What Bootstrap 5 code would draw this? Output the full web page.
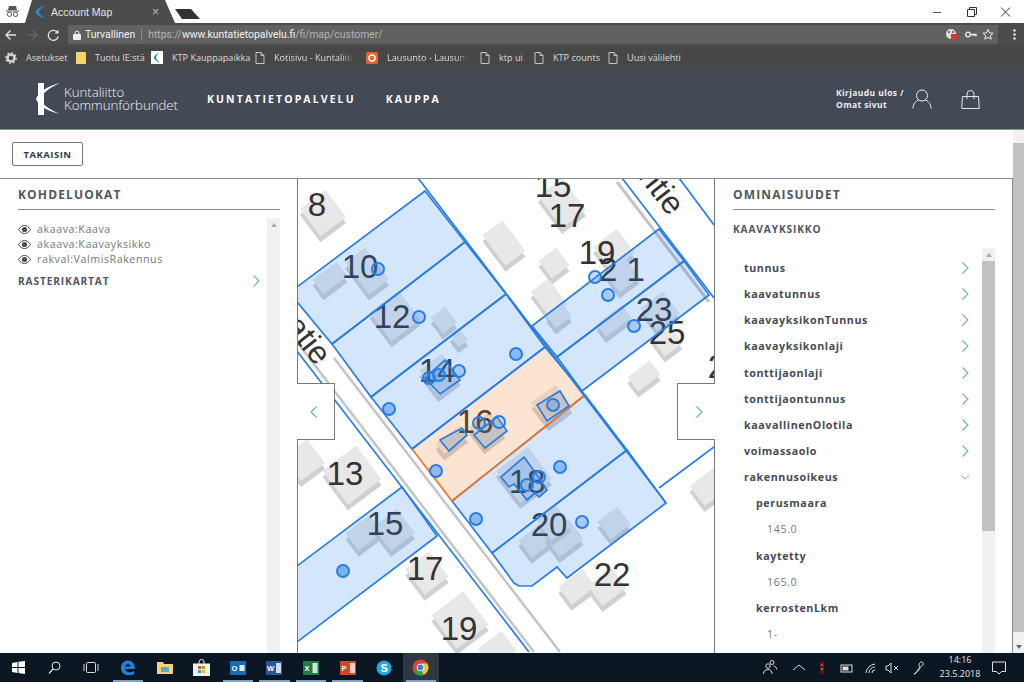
<!DOCTYPE html>
<html lang="fi">
<head>
<meta charset="UTF-8">
<title>Account Map</title>
<link rel="stylesheet" href="https://cdn.jsdelivr.net/npm/bootstrap@5.3.0/dist/css/bootstrap.min.css">
<style>
html, body { height: 682px; overflow: hidden; }
body { font-family: "Open Sans", "Liberation Sans", sans-serif; background: #fff; color: #4a4f57; }
svg { display: block; flex: none; }

/* selaimen yläosa */
.tabstrip { height: 23px; }
.incog { width: 25px; }
.tabshape { width: 150px; height: 23px; background: #4b4b4b; color: #e6e6e6; font: 10.5px "Liberation Sans", sans-serif; clip-path: polygon(0 100%, 7px 0, 140px 0, 100% 100%); padding: 0 11px 0 10px; }
.tabclose { margin-left: auto; margin-right: 5px; color: #bbb; font-size: 12px; }
.newtab { width: 25px; height: 10px; margin-bottom: 4px; background: #333; clip-path: polygon(0 0, 16px 0, 100% 100%, 7px 100%); }
.winbtns { width: 96px; }
.toolbar { height: 23px; background: #4b4b4b; }
.urlbox { width: 930px; height: 19px; margin-left: 6px; background: #616161; font: 10.4px Roboto, "Liberation Sans", sans-serif; color: #f2f2f2; padding: 0 3px 0 5px; }
.urlbox .sep { width: 1px; height: 13px; background: #888; margin: 0 6px; }
.urlbox i { font-style: normal; color: #b4b4b4; }
.bookmarks { height: 23px; background: #474747; color: #dcdcdc; font: 9.1px "Open Sans", sans-serif; padding-left: 5px; }
.bm { display: flex; align-items: center; gap: 9px; white-space: nowrap; }
.bm:nth-child(1) { width: 71px; }
.bm:nth-child(2) { width: 75px; }
.bm:nth-child(3) { width: 104px; }
.bm:nth-child(4) { width: 111px; }
.bm:nth-child(5) { width: 114px; }
.bm:nth-child(6) { width: 54px; }
.bm:nth-child(7) { width: 74px; }
.bm .cut { overflow: hidden; -webkit-mask-image: linear-gradient(90deg, #000 85%, transparent); mask-image: linear-gradient(90deg, #000 85%, transparent); }
.bm .cutk { width: 80px; }
.bm .cutl { width: 81px; }

/* sivun ylätunniste */
.ktp-head { height: 61px; background: #434a56; border-bottom: 1px solid #4aa9bd; padding: 0; }
.logoarea { margin-left: 35px; width: 172px; }
.logotxt { font: 300 13.2px/13px "Open Sans", sans-serif; color: #f2f2f2; margin-left: 3px; }
.ktp-head .navbar-nav .nav-link { padding: 0; color: #fff; font: 700 10.5px "Open Sans", sans-serif; letter-spacing: 2.1px; }
.navone { margin-right: 30px; }
.userbox { margin-left: auto; margin-right: 44px; color: #eceef0; font: 700 8.5px/12px "Open Sans", sans-serif; letter-spacing: .4px; }
.bagicon { margin-left: 21px; }

/* sisältö */
.pagewrap { flex: 1; min-height: 0; }
.pagecol { width: 1013px; }
.backrow { height: 48px; padding: 12px 0 0 12px; }
.backbtn { display: block; width: 71px; height: 24px; padding: 0; border: 1px solid #777; border-radius: 2px; background: #fff; color: #333b45; font: 700 9.5px "Open Sans", sans-serif; letter-spacing: .5px; }
.mainrow { height: 475px; border-top: 1px solid #8b8b8b; border-right: 1px solid #8b8b8b; }
.leftcol { width: 297px; padding: 0 17px 0 18px; }
.mapcol { width: 418px; border-left: 1px solid #777; border-right: 1px solid #777; }
.rightcol { width: 297px; padding: 0 17px 0 18px; }
.paneltitle { height: 31px; margin: 0; padding-top: 7px; border-bottom: 1px solid #8b8b8b; font: 700 12px/17px "Open Sans", sans-serif; letter-spacing: 1.15px; color: #50565f; }
.scrollpane { flex: 1; min-height: 0; }
.paneltrack { width: 13px; background: #f1f1f1; }
.paneltrack .thumb { height: 270px; margin-top: 13px; background: #c1c1c1; }
.tritop { display: block; margin: 5px auto 0; width: 0; height: 0; border: 3px solid transparent; border-top: 0; border-bottom: 4px solid #a9a9a9; }
.layerlist { margin-top: 12px; font-size: 10.7px; line-height: 15px; letter-spacing: .55px; color: #777; }
.layerlist li { display: flex; align-items: center; gap: 6px; }
.subhead { font: 700 10.2px/14px "Open Sans", sans-serif; letter-spacing: .85px; color: #50565f; }
.rasterrow { margin-top: 7px; padding-right: 7px; }
.kvtitle { margin: 12px 0 12px; }
.proplist { --bs-list-group-bg: transparent; --bs-list-group-border-width: 0; --bs-list-group-item-padding-x: 0; --bs-list-group-item-padding-y: 0; --bs-list-group-color: #454b54; padding: 7px 12px 0 11px; }
.proplist .list-group-item { height: 26.15px; display: flex; align-items: center; justify-content: space-between; font-size: 10.7px; font-weight: 700; letter-spacing: .6px; }
.proplist .lvl2 { padding-left: 12px; }
.proplist .lvl3 { padding-left: 23px; font-weight: 400; color: #777; }
.chevr { margin-right: 1px; }

/* kartta */
.mapbtn { position: absolute; width: 38px; height: 57px; top: 204px; background: #fff; border: 1px solid #777; display: flex; align-items: center; justify-content: center; }
.mapbtn.prev { left: -1px; border-left: 0; }
.mapbtn.next { right: -1px; border-right: 0; }

/* sivun vierityspalkki */
.pagescroll { width: 11px; background: #c1c1c1; position: relative; }
.pagescroll .topcap { height: 13px; background: #f1f1f1; }
.pagescroll .botcap { position: absolute; bottom: 0; left: 0; right: 0; height: 21px; background: #f1f1f1; }
.tribot { position: absolute; bottom: 4px; left: 3px; width: 0; height: 0; border: 3px solid transparent; border-bottom: 0; border-top: 4px solid #666; }

/* tehtäväpalkki */
.taskbar { height: 29px; background: #0a1622; color: #e8e8e8; font: 9px/14px "Open Sans", sans-serif; }
.tbslot { width: 36.6px; height: 29px; display: flex; align-items: center; justify-content: center; position: relative; }
.tbslot.run::after { content: ""; position: absolute; left: 3px; right: 3px; bottom: 0; height: 2px; background: #7aa4c8; }
.tbslot.act { background: #2f3841; }
.appglyph { font: 700 7.5px "Liberation Sans", sans-serif; fill: #fff; }
.tray { margin-left: auto; }
.clockbox { width: 56px; text-align: center; margin: -2px 4px 0 0; }
.notif { margin-right: 18px; }
</style>
</head>
<body class="d-flex flex-column">

<svg width="0" height="0" class="position-absolute">
  <symbol id="chev" viewBox="0 0 8 14"><path d="M1.500 1.500l5.500 5.500-5.500 5.500" fill="none" stroke="#6aa9ca" stroke-width="1.100"/></symbol>
  <symbol id="eye" viewBox="0 0 13 9"><path d="M.5 4.500C2.500 1.500 4.500.5 6.500.5s4 1 6 4c-2 3-4 4-6 4s-4-1-6-4z" fill="none" stroke="#4d4d4d"/><circle cx="6.500" cy="4.500" r="2.600" fill="#4d4d4d"/></symbol>
  <symbol id="doc" viewBox="0 0 10 12"><path d="M1 .5h5l3 3v8H1zM6 .5v3h3" fill="none" stroke="#d4d4d4" stroke-width=".9"/></symbol>
</svg>

<!-- selaimen välilehdet -->
<div class="tabstrip d-flex align-items-end">
  <div class="incog d-flex justify-content-center align-self-center">
    <svg width="13" height="11" viewBox="0 0 13 11"><path d="M3 0h7l1 4H2zM0 4.500h13v1H0z" fill="#555"/><circle cx="3.500" cy="8.300" r="2.200" fill="none" stroke="#555"/><circle cx="9.500" cy="8.300" r="2.200" fill="none" stroke="#555"/></svg>
  </div>
  <div class="tabshape d-flex align-items-center gap-1">
    <svg width="12" height="14" viewBox="0 0 12 14"><path d="M11 0C5 2 1 5 .5 7c.5 3 5 5 10.500 7C7 11 4 9 4 7s3-4 7-7z" fill="#2c8fc4"/></svg>
    <span>Account Map</span>
    <span class="tabclose">×</span>
  </div>
  <div class="newtab"></div>
  <div class="winbtns ms-auto align-self-center">
    <svg width="96" height="12" viewBox="0 0 96 12"><path d="M5 6.500h8" stroke="#555"/><path d="M39.500 3.500h7v7h-7zM41.500 3.500v-2h7v7h-2" fill="none" stroke="#333"/><path d="M73 1.500l9 9M82 1.500l-9 9" stroke="#333"/></svg>
  </div>
</div>

<!-- osoiterivi -->
<div class="toolbar d-flex align-items-center">
  <svg class="ms-1" width="58" height="14" viewBox="0 0 58 14"><path d="M12 7H2M6.500 2.500L2 7l4.500 4.500" fill="none" stroke="#e4e4e4" stroke-width="1.300"/><path d="M33 7H23M28.500 2.500L33 7l-4.500 4.500" fill="none" stroke="#666" stroke-width="1.300"/><path d="M53.500 4.500a5 5 0 1 0 .7 4" fill="none" stroke="#e4e4e4" stroke-width="1.300"/><path d="M54.500 1.500v4h-4z" fill="#e4e4e4"/></svg>
  <div class="urlbox d-flex align-items-center">
    <svg width="8" height="10" viewBox="0 0 8 10" class="me-1"><path d="M2 4V3a2 2 0 0 1 4 0v1" fill="none" stroke="#eee"/><rect y="4" width="8" height="6" rx="1" fill="#eee"/></svg>
    <span class="ms-0">Turvallinen</span><span class="sep"></span>
    <span><i>https://</i>www.kuntatietopalvelu.fi<i>/fi/map/customer/</i></span>
    <svg class="ms-auto" width="50" height="13" viewBox="0 0 50 13"><circle cx="6" cy="6" r="5" fill="#dedede"/><circle cx="4" cy="4" r="1" fill="#555"/><circle cx="8" cy="4" r="1" fill="#555"/><rect x="6" y="6" width="6" height="6" fill="#d33"/><circle cx="23" cy="6.500" r="2.300" fill="none" stroke="#eee" stroke-width="1.300"/><path d="M25 6.500h6v2M29 6.500v1.500" fill="none" stroke="#eee" stroke-width="1.300"/><path d="M43 1.500l1.500 3.400 3.600.3-2.700 2.400.8 3.600-3.200-1.900-3.200 1.900.8-3.600-2.700-2.400 3.600-.3z" fill="none" stroke="#eee"/></svg>
  </div>
  <svg class="ms-auto me-2" width="3" height="11" viewBox="0 0 3 11"><circle cx="1.500" cy="1.500" r="1.200" fill="#eee"/><circle cx="1.500" cy="5.500" r="1.200" fill="#eee"/><circle cx="1.500" cy="9.500" r="1.200" fill="#eee"/></svg>
</div>

<!-- kirjanmerkit -->
<div class="bookmarks d-flex align-items-center">
  <div class="bm"><svg width="12" height="12" viewBox="0 0 12 12"><circle cx="6" cy="6" r="3.500" fill="none" stroke="#d4d4d4" stroke-width="2.500"/><circle cx="6" cy="6" r="5.200" fill="none" stroke="#d4d4d4" stroke-width="1.300" stroke-dasharray="2 2"/></svg><span>Asetukset</span></div>
  <div class="bm"><svg width="10" height="12" viewBox="0 0 10 12"><rect width="10" height="12" rx="1" fill="#f4d66b"/></svg><span>Tuotu IE:stä</span></div>
  <div class="bm"><svg width="12" height="13" viewBox="0 0 12 13"><rect width="12" height="13" fill="#fff"/><path d="M9 1C5 3 3 5 3 6.500S5 10 9 12C6 9 5 8 5 6.500S6 3 9 1z" fill="#1b7fb2"/></svg><span>KTP Kauppapaikka</span></div>
  <div class="bm"><svg width="10" height="12"><use href="#doc"/></svg><span class="cut cutk">Kotisivu - Kuntaliitor</span></div>
  <div class="bm"><svg width="12" height="12" viewBox="0 0 12 12"><rect width="12" height="12" rx="2" fill="#e8642c"/><circle cx="6" cy="6" r="3" fill="none" stroke="#fff" stroke-width="1.500"/></svg><span class="cut cutl">Lausunto - Lausunto</span></div>
  <div class="bm"><svg width="10" height="12"><use href="#doc"/></svg><span>ktp ui</span></div>
  <div class="bm"><svg width="10" height="12"><use href="#doc"/></svg><span>KTP counts</span></div>
  <div class="bm"><svg width="10" height="12"><use href="#doc"/></svg><span>Uusi välilehti</span></div>
</div>

<!-- sivun ylätunniste -->
<nav class="navbar navbar-expand ktp-head flex-nowrap align-items-center">
  <div class="logoarea d-flex align-items-center">
    <svg width="26" height="34" viewBox="0 0 26 34"><path d="M3 1h6v32H3z" fill="#fff"/><path d="M25 1C17 5 9 9 7 15c-2 5 2 10 18 17C15 30 3 24 1 17 3 10 13 4 25 1z" fill="#fff"/></svg>
    <div class="logotxt">Kuntaliitto<br>Kommunförbundet</div>
  </div>
  <ul class="navbar-nav">
    <li class="nav-item navone"><a class="nav-link" href="#">KUNTATIETOPALVELU</a></li>
    <li class="nav-item"><a class="nav-link" href="#">KAUPPA</a></li>
  </ul>
  <div class="userbox d-flex align-items-center gap-2">
    <div>Kirjaudu ulos /<br>Omat sivut</div>
    <svg width="20" height="20" viewBox="0 0 20 20"><circle cx="10" cy="6.500" r="5.500" fill="none" stroke="#eee"/><path d="M.8 19.500c.5-5 3.500-8 6-8.500M19.200 19.500c-.5-5-3.500-8-6-8.500" fill="none" stroke="#eee"/></svg>
    <svg class="bagicon" width="19" height="19" viewBox="0 0 19 19"><path d="M1.500 6.500h16l.8 12H.7zM6 9V4a3.500 3.500 0 0 1 7 0v5" fill="none" stroke="#e4e4e4"/></svg>
  </div>
</nav>

<div class="pagewrap d-flex">
  <div class="pagecol">
    <div class="backrow"><button type="button" class="btn backbtn">TAKAISIN</button></div>

    <div class="mainrow d-flex">
      <!-- kohdeluokat -->
      <div class="leftcol d-flex flex-column">
        <h2 class="paneltitle">KOHDELUOKAT</h2>
        <div class="scrollpane d-flex">
          <div class="flex-grow-1">
            <ul class="layerlist list-unstyled mb-0">
              <li><svg width="13" height="9"><use href="#eye"/></svg>akaava:Kaava</li>
              <li><svg width="13" height="9"><use href="#eye"/></svg>akaava:Kaavayksikko</li>
              <li><svg width="13" height="9"><use href="#eye"/></svg>rakval:ValmisRakennus</li>
            </ul>
            <div class="rasterrow subhead d-flex justify-content-between align-items-center">RASTERIKARTAT<svg width="8" height="14"><use href="#chev"/></svg></div>
          </div>
          <div class="paneltrack mt-2"><span class="tritop"></span></div>
        </div>
      </div>

      <!-- kartta -->
      <div class="mapcol position-relative">
        <svg id="kartta" width="416" height="474" viewBox="1 1 416 474"></svg>
        <div class="mapbtn prev"><svg width="8" height="14" class="me-1"><use href="#chev" transform="matrix(-1 0 0 1 8 0)"/></svg></div>
        <div class="mapbtn next"><svg width="8" height="14" class="ms-1"><use href="#chev"/></svg></div>
      </div>

      <!-- ominaisuudet -->
      <div class="rightcol d-flex flex-column">
        <h2 class="paneltitle">OMINAISUUDET</h2>
        <div class="subhead kvtitle">KAAVAYKSIKKO</div>
        <div class="scrollpane d-flex overflow-hidden">
          <div class="flex-grow-1">
            <div class="list-group proplist" id="proplist"></div>
          </div>
          <div class="paneltrack"><span class="tritop position-absolute ms-1"></span><div class="thumb"></div></div>
        </div>
      </div>
    </div>
  </div>
  <div class="pagescroll"><div class="topcap"></div><div class="botcap"><span class="tribot"></span></div></div>
</div>

<!-- tehtäväpalkki -->
<div class="taskbar d-flex align-items-center">
  <div class="tbslot"><svg width="13" height="13" viewBox="0 0 13 13"><path d="M0 2l5.500-1v5H0zM6.500.8L13 0v6H6.500zM0 7h5.500v5L0 11zM6.500 7H13v6l-6.500-.9z" fill="#fff"/></svg></div>
  <div class="tbslot"><svg width="13" height="13" viewBox="0 0 13 13"><circle cx="8" cy="5" r="4" fill="none" stroke="#e4e4e4"/><path d="M5 8l-4 4.500" stroke="#e4e4e4" stroke-width="1.200"/></svg></div>
  <div class="tbslot"><svg width="16" height="11" viewBox="0 0 16 11"><rect x="3.500" y=".5" width="9" height="10" rx="1" fill="none" stroke="#ddd"/><path d="M1 2v7M15 2v7" stroke="#ddd"/></svg></div>
  <div class="tbslot run"><svg width="16" height="16" viewBox="0 0 16 16"><path d="M1 8c0-5 3-7.500 7-7.500s7 3 7 8.500H5c.3 3 4.500 4.500 9 2v3.500c-6 2-13 .5-13-6.500zM5 6.500h5.500C10.300 3.500 5.500 3.500 5 6.500z" fill="#1e7fd6"/></svg></div>
  <div class="tbslot"><svg width="16" height="13" viewBox="0 0 16 13"><path d="M0 1h6l1 2h9v10H0z" fill="#f2d374"/><rect x="4" y="6" width="8" height="5" fill="#4fb0c6"/></svg></div>
  <div class="tbslot"><svg width="17" height="17" viewBox="0 0 17 17"><path d="M6 5V3a2.500 2.500 0 0 1 5 0v2" fill="none" stroke="#eee"/><rect y="4.500" width="17" height="12.500" fill="#f2f2f2"/><rect x="5" y="7" width="3" height="3" fill="#e6532c"/><rect x="9" y="7" width="3" height="3" fill="#7cb82f"/><rect x="5" y="11" width="3" height="3" fill="#2d9fe0"/><rect x="9" y="11" width="3" height="3" fill="#f5b91e"/></svg></div>
  <div class="tbslot run"><svg width="16" height="14" viewBox="0 0 16 14"><rect width="16" height="14" fill="#1669b5"/><text class="appglyph" x="1.500" y="10">O</text><path d="M9.500 4h5v6h-5z" fill="#dfe9f3"/></svg></div>
  <div class="tbslot run"><svg width="16" height="14" viewBox="0 0 16 14"><rect width="16" height="14" fill="#2b579a"/><text class="appglyph" x="1" y="10">W</text><path d="M10 2h5v10h-5z" fill="#cfdcee"/></svg></div>
  <div class="tbslot run"><svg width="16" height="14" viewBox="0 0 16 14"><rect width="16" height="14" fill="#1f7a45"/><text class="appglyph" x="1.500" y="10">X</text><path d="M9.500 2h5v10h-5z" fill="#cfe6d8"/></svg></div>
  <div class="tbslot run"><svg width="16" height="14" viewBox="0 0 16 14"><rect width="16" height="14" fill="#d24726"/><text class="appglyph" x="1.500" y="10">P</text><path d="M10 2h5v10h-5z" fill="#f4d0c6"/></svg></div>
  <div class="tbslot"><svg width="16" height="16" viewBox="0 0 16 16"><circle cx="8" cy="8" r="7.500" fill="#22a9e0"/><text x="4.500" y="12" font-family="Liberation Sans" font-weight="700" font-size="11" fill="#fff">S</text></svg></div>
  <div class="tbslot run act"><svg width="17" height="17" viewBox="0 0 17 17"><circle cx="8.500" cy="8.500" r="8" fill="#d9433a"/><path d="M8.500 8.500L1.600 12.500A8 8 0 0 0 8.500 16.500c1 0 2-.2 3-.6z" fill="#2f9e4f"/><path d="M8.500 8.500l3 7.400A8 8 0 0 0 15.400 4.500H8.500z" fill="#f6c52d"/><circle cx="8.500" cy="8.500" r="3.800" fill="#fff"/><circle cx="8.500" cy="8.500" r="2.900" fill="#3b82e0"/></svg></div>

  <div class="tray d-flex align-items-center">
    <svg width="172" height="18" viewBox="0 0 172 18"><g fill="none" stroke="#dcdcdc"><circle cx="8" cy="7" r="2.200"/><path d="M3.500 15c0-3 2-4.500 4.500-4.500S12 12 12 15"/><circle cx="12" cy="3.500" r="2"/><path d="M13.500 7c2 .3 3 1.500 3.300 3.500"/><path d="M33 11l6-5 6 5"/></g><rect x="60" y="3" width="4" height="12" fill="#4a1e1a"/><circle cx="62" cy="6" r="1.300" fill="#d33"/><circle cx="62" cy="10" r="1.300" fill="#a86a22"/><g fill="none" stroke="#dcdcdc"><rect x="81" y="6" width="11" height="7"/><path d="M106 14a10 10 0 0 1 9-9M109 14a6 6 0 0 1 6-6M112 14a3 3 0 0 1 3-3"/><path d="M126 7h2l3-3v10l-3-3h-2zM134 7l4 4M138 7l-4 4"/><path d="M154 15c3 0 3-4 5-6s5-2 4-5-4 0-4 2 2 3 0 5-4 3-5 4z"/></g><rect x="82.500" y="7.500" width="6" height="4" fill="#dcdcdc"/></svg>
    <div class="clockbox">14:16<br>23.5.2018</div>
    <svg class="notif" width="14" height="14" viewBox="0 0 14 14"><path d="M.5 1h13v9.500H9.500L7 13l-2.500-2.500h-4z" fill="none" stroke="#e4e4e4"/></svg>
  </div>
</div>

<script>
// ominaisuuslista
const props = [
  ["tunnus", 1, "r"], ["kaavatunnus", 1, "r"], ["kaavayksikonTunnus", 1, "r"], ["kaavayksikonlaji", 1, "r"],
  ["tonttijaonlaji", 1, "r"], ["tonttijaontunnus", 1, "r"], ["kaavallinenOlotila", 1, "r"], ["voimassaolo", 1, "r"],
  ["rakennusoikeus", 1, "d"], ["perusmaara", 2], ["145.0", 3], ["kaytetty", 2], ["165.0", 3], ["kerrostenLkm", 2], ["1-", 3]
];
const propList = document.getElementById("proplist");
props.forEach(([text, level, arrow]) => {
  let icon = "";
  if (arrow === "r") icon = '<svg width="8" height="14" class="chevr"><use href="#chev"/></svg>';
  if (arrow === "d") icon = '<svg width="10" height="7" viewBox="0 0 12 8"><path d="M1 1l5 5 5-5" fill="none" stroke="#6aa9ca" stroke-width="1.100"/></svg>';
  propList.insertAdjacentHTML("beforeend", `<div class="list-group-item lvl${level}"><span>${text}</span>${icon}</div>`);
});

// kartta: rakennukset [x, y, leveys, korkeus]
const buildings = [
  [26,35,32,34],[33,100,30,18],[70,93,25,40],[98,138,36,36],[147,142,18,20],[162,160,12,14],[143,197,28,32],
  [265,25,30,40],[207,65,25,38],[257,85,22,22],[252,120,22,32],[262,138,20,16],[317,72,30,30],[325,97,25,25],
  [317,143,32,16],[363,133,28,28],[370,163,22,22],[347,198,28,18],[155,262,30,14],[190,252,26,26],[255,227,30,28],
  [227,297,40,40],[240,362,30,22],[267,360,30,25],[257,345,25,25],[317,345,25,22],[67,355,30,22],[97,352,30,30],
  [55,297,42,42],[7,282,30,30],[412,309,30,25],[130,395,30,32],[163,442,40,42],[280,409,30,22],[310,409,30,25],[200,472,30,25]
];
const labels = [
  ["8",20,38],["10",63,100],["12",95,150],["14",140,204],["15",256,19],["17",270,49],["19",300,86],["2 1",325,103],
  ["23",357,143],["25",370,166],["2",420,200],["16",178,255],["18",230,315],["20",252,358],["22",315,408],
  ["15",88,357],["13",48,307],["17",128,402],["19",162,462]
];
// ympyrät [x, y, täyttö]
const dots = [
  [81,91,.3],[122,139,.3],[142,197,.3],[162,193,.3],[132,200,.3],[219,176,.5],[92,231,.5],[298,99,.3],[311,117,.3],[337,148,.3],[256,227,.3],
  [182,245,.2],[202,244,.2],[139,293,.5],[263,289,.5],[242,299,.2],[230,307,.2],[179,341,.5],[285,344,.3],[46,393,.6]
];
const blueParcels = [
  "0,109 128,13 168,64 35,166 0,124",
  "35,166 168,64 209,116 74,219",
  "74,219 209,116 248,169 115,271",
  "155,323 288,217 330,272 195,375",
  "195,375 330,272 369,325 270,400 260,389 235,408 222,408 217,405",
  "235,148 362,51 387,83 260,179",
  "260,179 387,83 412,117 285,213",
  "0,388 105,309 140,358 0,464"
];
const outlines = [
  "128,200 148,182 163,202 143,216","143,262 165,250 170,257 152,273","177,257 200,239 210,253 188,270",
  "240,227 263,213 272,228 250,243","204,299 227,279 242,300 250,312 242,319 238,315 230,322 217,306 212,309"
];

let m = "";
// tie
m += '<path d="M37 180L263 474M0 164L237 474" fill="none" stroke="#c4c4c4" stroke-width="2.500"/>';
m += '<path d="M325 0L417 120" fill="none" stroke="#c4c4c4" stroke-width="3" transform="translate(-5 4)"/>';
buildings.forEach(([x, y, w, h]) => {
  const box = `x="${-w/2}" y="${-h/2}" width="${w}" height="${h}"`;
  m += `<rect ${box} fill="#d0d0d0" transform="translate(${x} ${y + 6}) rotate(-37)"/>`;
  m += `<rect ${box} fill="#e8e8e8" transform="translate(${x} ${y}) rotate(-37)"/>`;
});
labels.forEach(([t, x, y]) => {
  m += `<text x="${x}" y="${y}" text-anchor="middle" font-family="Liberation Sans" font-size="33" fill="#333">${t}</text>`;
});
m += '<text transform="translate(-2 175) rotate(52)" font-family="Liberation Sans" font-size="32" fill="#333" text-anchor="middle" x="-2" y="-8">atie</text>';
m += '<text transform="translate(355 30) rotate(52)" font-family="Liberation Sans" font-size="32" fill="#333" text-anchor="middle" x="-8" y="-8">ntie</text>';
blueParcels.forEach(p => {
  m += `<polygon points="${p}" fill="rgba(40,130,240,.2)" stroke="#2a7de1" stroke-width="1.700"/>`;
});
// valittu tontti
m += '<polygon points="115,271 248,169 288,217 155,323" fill="rgba(240,120,30,.2)"/>';
m += '<path d="M248 169L288 217" stroke="#2a7de1" stroke-width="1.700"/><path d="M115 271L248 169" stroke="#2a7de1" stroke-width="1.700"/><path d="M115 271L155 323L288 217" fill="none" stroke="#e8792c" stroke-width="1.700"/>';
// pitkät rajaviivat
m += '<path d="M121 0L369 325M0 173L232 474M325 0L417 120M382 0L417 47M362 310L417 269" fill="none" stroke="#2a7de1" stroke-width="1.700"/>';
outlines.forEach(p => {
  m += `<polygon points="${p}" fill="rgba(47,127,220,.18)" stroke="#2a7de1" stroke-width="1.700"/>`;
});
dots.forEach(([x, y, a]) => {
  m += `<circle cx="${x}" cy="${y}" r="6" fill="rgba(60,140,240,${a})" stroke="#2a7de1" stroke-width="2"/>`;
});
document.getElementById("kartta").innerHTML = m;
</script>
<script src="https://cdn.jsdelivr.net/npm/bootstrap@5.3.0/dist/js/bootstrap.bundle.min.js"></script>
</body>
</html>
